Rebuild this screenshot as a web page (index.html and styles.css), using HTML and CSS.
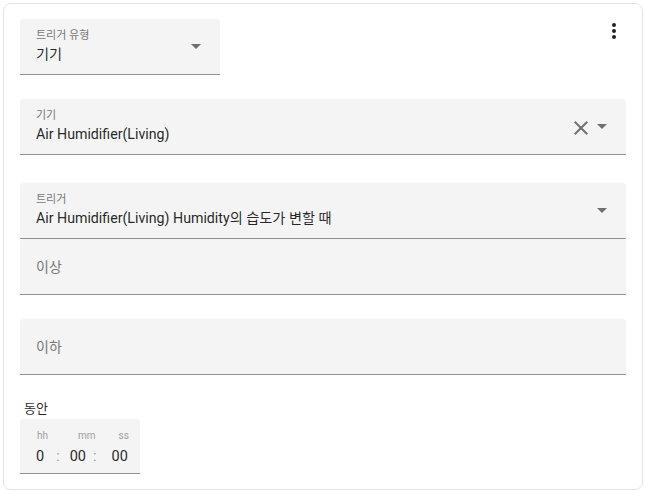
FILE: index.html
```html
<!DOCTYPE html>
<html lang="ko">
<head>
    <meta charset="UTF-8">
    <meta name="viewport" content="width=device-width, initial-scale=1.0">
    <title>트리거</title>
    <link rel="stylesheet" href="styles.css">
</head>
<body>
    <div class="card">
        <div class="top-row">
            <div class="field field-type">
                <div class="field-body">
                    <span class="label">트리거 유형</span>
                    <span class="value">기기</span>
                </div>
                <span class="arrow"></span>
            </div>
            <svg class="menu" width="24" height="24" viewBox="0 0 24 24">
                <path fill="#212121" d="M12,16A2,2 0 0,1 14,18A2,2 0 0,1 12,20A2,2 0 0,1 10,18A2,2 0 0,1 12,16M12,10A2,2 0 0,1 14,12A2,2 0 0,1 12,14A2,2 0 0,1 10,12A2,2 0 0,1 12,10M12,4A2,2 0 0,1 14,6A2,2 0 0,1 12,8A2,2 0 0,1 10,6A2,2 0 0,1 12,4Z"/>
            </svg>
        </div>

        <div class="field field-device">
            <div class="field-body">
                <span class="label">기기</span>
                <span class="value">Air Humidifier(Living)</span>
            </div>
            <svg class="clear" width="24" height="24" viewBox="0 0 24 24">
                <path fill="#6f6f6f" d="M19,6.41L17.59,5L12,10.59L6.41,5L5,6.41L10.59,12L5,17.59L6.41,19L12,13.41L17.59,19L19,17.59L13.41,12L19,6.41Z"/>
            </svg>
            <span class="arrow"></span>
        </div>

        <div class="field field-trigger">
            <div class="field-body">
                <span class="label">트리거</span>
                <span class="value">Air Humidifier(Living) Humidity의 습도가 변할 때</span>
            </div>
            <span class="arrow"></span>
        </div>

        <div class="field">
            <div class="field-body">
                <span class="placeholder">이상</span>
            </div>
        </div>

        <div class="field field-below">
            <div class="field-body">
                <span class="placeholder">이하</span>
            </div>
        </div>

        <div class="duration-title">동안</div>
        <div class="duration">
            <div class="duration-labels">
                <span class="lbl-h">hh</span>
                <span class="lbl-m">mm</span>
                <span class="lbl-s">ss</span>
            </div>
            <div class="duration-values">
                <span class="val-h">0</span>
                <span class="sep sep-1">:</span>
                <span class="val-m">00</span>
                <span class="sep sep-2">:</span>
                <span class="val-s">00</span>
            </div>
        </div>
    </div>
</body>
</html>
```

FILE: styles.css
```css
body {
    margin: 0;
    padding: 3px;
    background: #ffffff;
    font-family: Roboto, "Noto Sans CJK KR", sans-serif;
    color: rgba(0, 0, 0, 0.87);
}
.card {
    width: 606px;
    height: 470px;
    padding: 15px 16px 0 16px;
    border: 1px solid #e3e3e3;
    border-radius: 8px;
    background: #fff;
}
.top-row {
    display: flex;
    justify-content: space-between;
    align-items: flex-start;
}
.menu {
    display: block;
}
.field {
    display: flex;
    align-items: center;
    height: 55px;
    padding: 0 19px 0 16px;
    background: #f4f4f4;
    border-bottom: 1px solid #8f8f8f;
    border-radius: 4px 4px 0 0;
}
.field-type {
    width: 165px;
}
.field-device {
    margin-top: 24px;
}
.field-trigger {
    margin-top: 28px;
}
.field-below {
    margin-top: 24px;
}
.field-body {
    flex: 1;
    display: flex;
    flex-direction: column;
    min-width: 0;
}
.label {
    font-size: 11px;
    line-height: 14px;
    color: #777;
    margin-bottom: 1px;
}
.value {
    font-size: 14.2px;
    line-height: 20px;
    white-space: nowrap;
}
.placeholder {
    font-size: 14px;
    line-height: 20px;
    color: #777;
}
.arrow {
    width: 0;
    height: 0;
    border-left: 5px solid transparent;
    border-right: 5px solid transparent;
    border-top: 5px solid #6f6f6f;
}
.clear {
    display: block;
    margin-right: 4px;
    margin-top: 2px;
}
.duration-title {
    margin: 25px 0 0 4px;
    font-size: 13px;
    line-height: 18px;
    height: 19px;
}
.duration {
    width: 120px;
    height: 55px;
    box-sizing: border-box;
    padding-top: 10px;
    background: #f4f4f4;
    border-bottom: 1px solid #8f8f8f;
    border-radius: 4px 4px 0 0;
}
.duration-labels {
    display: flex;
    font-size: 10px;
    line-height: 14px;
    color: #9e9e9e;
}
.lbl-h {
    margin-left: 17px;
}
.lbl-m {
    margin-left: 30px;
}
.lbl-s {
    margin-left: 23px;
}
.duration-values {
    display: flex;
    margin-top: 5px;
    font-size: 14.5px;
    line-height: 18px;
}
.val-h {
    margin-left: 16px;
}
.sep {
    color: #9e9e9e;
}
.sep-1 {
    margin-left: 12px;
}
.val-m {
    margin-left: 10px;
}
.sep-2 {
    margin-left: 7px;
}
.val-s {
    margin-left: 15px;
}
```
